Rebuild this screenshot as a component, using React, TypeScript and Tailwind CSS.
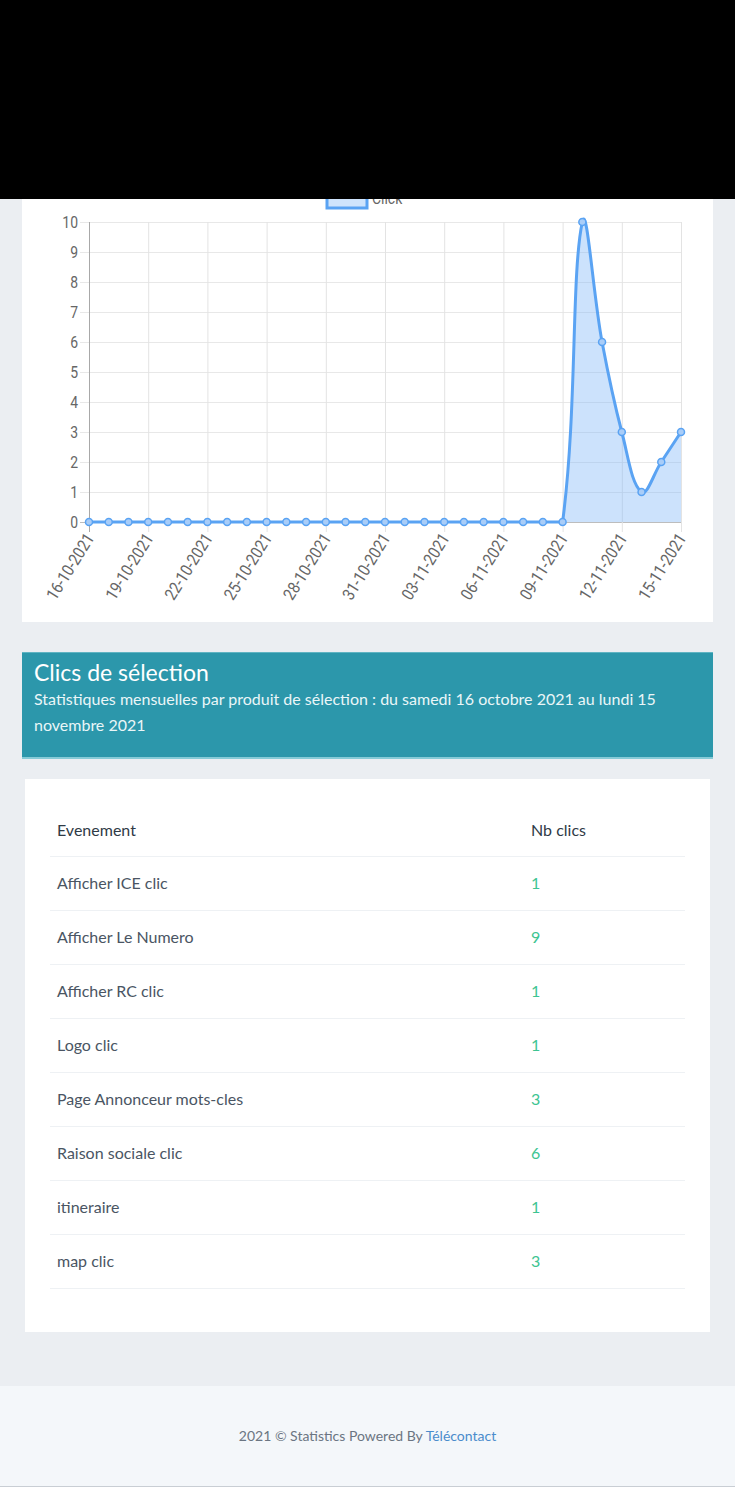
import React from 'react';

const font = { fontFamily: 'Lato, "Open Sans", sans-serif' };

const rows: [string, number][] = [
  ['Afficher ICE clic', 1],
  ['Afficher Le Numero', 9],
  ['Afficher RC clic', 1],
  ['Logo clic', 1],
  ['Page Annonceur mots-cles', 3],
  ['Raison sociale clic', 6],
  ['itineraire', 1],
  ['map clic', 3],
];

const data = [...Array(25).fill(0), 10, 6, 3, 1, 2, 3];

const labels = data.map((_, i) => {
  const d = new Date(2021, 9, 16 + i);
  const dd = String(d.getDate()).padStart(2, '0');
  const mm = String(d.getMonth() + 1).padStart(2, '0');
  return `${dd}-${mm}-${d.getFullYear()}`;
});

const X0 = 89, X1 = 681, Y0 = 522;
const px = (i: number) => X0 + (i * (X1 - X0)) / 30;
const py = (v: number) => Y0 - v * 30;

// chart.js style spline, tension 0.4
function linePath() {
  const pts = data.map((v, i) => ({ x: px(i), y: py(v) }));
  const cps = pts.map((cur, i) => {
    const prev = pts[i - 1] || cur;
    const next = pts[i + 1] || cur;
    const d01 = Math.hypot(cur.x - prev.x, cur.y - prev.y);
    const d12 = Math.hypot(next.x - cur.x, next.y - cur.y);
    let s01 = d01 / (d01 + d12);
    let s12 = d12 / (d01 + d12);
    if (isNaN(s01)) s01 = 0;
    if (isNaN(s12)) s12 = 0;
    const fa = 0.4 * s01, fb = 0.4 * s12;
    return {
      p: { x: cur.x - fa * (next.x - prev.x), y: cur.y - fa * (next.y - prev.y) },
      n: { x: cur.x + fb * (next.x - prev.x), y: cur.y + fb * (next.y - prev.y) },
    };
  });
  let d = `M${pts[0].x},${pts[0].y}`;
  for (let i = 1; i < pts.length; i++) {
    const a = cps[i - 1].n, b = cps[i].p;
    d += ` C${a.x},${Math.min(a.y, Y0)} ${b.x},${Math.min(b.y, Y0)} ${pts[i].x},${pts[i].y}`;
  }
  return d;
}

function Chart() {
  const line = linePath();
  const area = `${line} L${X1},${Y0} L${X0},${Y0} Z`;
  const ticks = data.map((_, i) => i).filter((i) => i % 3 === 0);
  return (
    <svg width="691" height="423" className="block overflow-hidden">
      <g transform="translate(-22,-199)" fontFamily="Roboto, sans-serif">
        {/* legend */}
        <rect x="327" y="190" width="40" height="18" fill="#cfe4fc" stroke="#5aa3f3" strokeWidth="3" />
        <text fontSize="17" fill="#666" transform="translate(372,204) scale(0.82,1)">Click</text>

        {/* grid */}
        {Array.from({ length: 11 }, (_, v) => (
          <line key={v} x1={80} x2={X1} y1={py(v) + 0.5} y2={py(v) + 0.5} stroke={v === 0 ? '#bdbdbd' : '#e8e8e8'} strokeWidth="1" />
        ))}
        {ticks.map((i) => (
          <line key={i} x1={px(i) + 0.5} x2={px(i) + 0.5} y1={222} y2={532} stroke={i === 0 ? '#a8a8a8' : '#e3e3e3'} strokeWidth="1" />
        ))}

        {/* y labels */}
        {Array.from({ length: 11 }, (_, v) => (
          <text key={v} fontSize="17" fill="#666" textAnchor="end" transform={`translate(78,${py(v) + 6}) scale(0.82,1)`}>
            {v}
          </text>
        ))}

        {/* x labels */}
        {ticks.map((i) => (
          <text key={i} fontSize="17" fill="#666" textAnchor="end" transform={`translate(${px(i) + 6},${538}) rotate(-58) scale(0.87,1)`}>
            {labels[i]}
          </text>
        ))}

        {/* data */}
        <path d={area} fill="rgba(120,178,247,0.38)" />
        <path d={line} fill="none" stroke="#5aa3f3" strokeWidth="3" />
        {data.map((v, i) => (
          <circle key={i} cx={px(i)} cy={py(v)} r="3.5" fill="#a9cdf8" stroke="#5aa3f3" strokeWidth="1.5" />
        ))}
      </g>
    </svg>
  );
}

export default function App() {
  return (
    <div className="min-h-[1487px] bg-[#ebeef2] flex flex-col" style={font}>
      <div className="h-[199px] bg-black shrink-0" />

      <div className="mx-[22px] bg-white">
        <Chart />
      </div>

      <div className="mx-[22px] mt-[30px] bg-[#2c97ab] border-t border-[#5fb4c3] border-b-2 border-b-[#86cbd7] px-3 pt-[6px] pb-[19px] text-white">
        <h2 className="text-[23px] leading-[27px]">Clics de sélection</h2>
        <p className="text-[16px] leading-[26px] text-[#eaf6f8]">
          Statistiques mensuelles par produit de sélection : du samedi 16 octobre 2021 au lundi 15 novembre 2021
        </p>
      </div>

      <div className="mx-[25px] mt-[20px] bg-white px-[25px] pt-[25px] pb-[43px]">
        <table className="w-full border-collapse">
          <thead>
            <tr className="border-b border-[#eef1f4]">
              <th className="h-[52px] pl-[7px] w-[481px] text-left font-normal text-[16px] text-[#2f3a46]">Evenement</th>
              <th className="h-[52px] text-left font-normal text-[16px] text-[#2f3a46]">Nb clics</th>
            </tr>
          </thead>
          <tbody>
            {rows.map(([name, n]) => (
              <tr key={name} className="border-b border-[#eef1f4]">
                <td className="h-[54px] pl-[7px] text-[16px] text-[#4a5563]">{name}</td>
                <td className="h-[54px] text-[16px] text-[#3dc491]">{n}</td>
              </tr>
            ))}
          </tbody>
        </table>
      </div>

      <div className="mt-[54px] h-[102px] bg-[#f4f7fa] border-b-2 border-[#c9ced4] flex items-center justify-center text-[14px] text-[#6b7582]">
        <span>
          2021 © Statistics Powered By <a className="text-[#4a8ccc]">Télécontact</a>
        </span>
      </div>
    </div>
  );
}
